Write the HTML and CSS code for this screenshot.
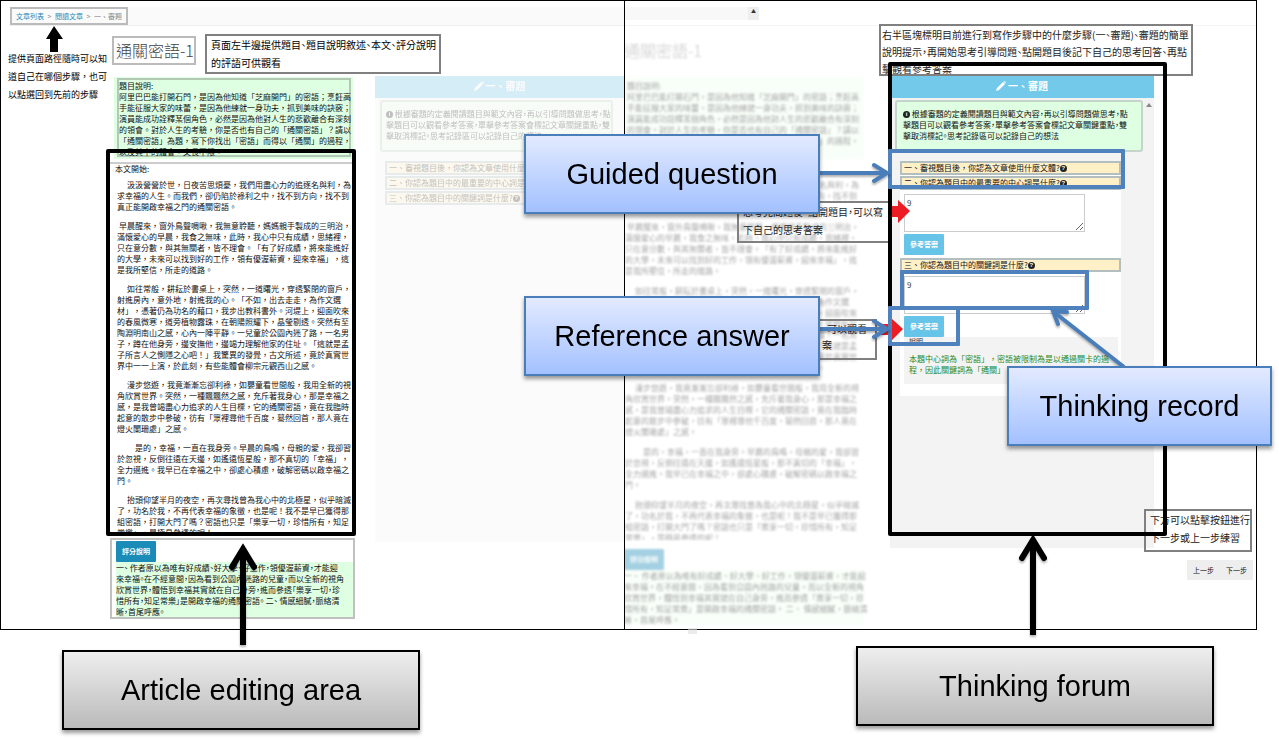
FILE: index.html
```html
<!DOCTYPE html>
<html lang="zh-Hant">
<head>
<meta charset="utf-8">
<title>通關密語-1</title>
<link rel="stylesheet" href="styles.css">
</head>
<body>
<main class="figure">
  <div class="screens">
    <section class="screen screen-left">
      <header class="topbar">
        <nav class="crumbs"><a href="#list">文章列表</a><span>&gt;</span><a href="#read">閱讀文章</a><span>&gt;</span><span>一、審題</span></nav>
      </header>
      <div class="columns">
        <article class="article">
          <h1 class="title">通關密語-1</h1>
          <div class="topic"><p class="topic-text">題目說明:<br>阿里巴巴能打開石門,是因為他知道「芝麻開門」的密語;烹飪高<br>手能征服大家的味蕾,是因為他練就一身功夫,抓到美味的訣竅;<br>演員能成功詮釋某個角色,必然是因為他對人生的悲歡離合有深刻<br>的領會。對於人生的考驗,你是否也有自己的「通關密語」?請以<br>「通關密語」為題,寫下你找出「密語」而得以「通關」的過程,<br>以及其中的體會。文長不限。</p></div>
          <div class="story">
            <h2 class="story-start">本文開始:</h2>
            <p class="in2">汲汲營營於世,日夜苦思煩憂,我們用盡心力的追逐名與利,為<br>求幸福的人生。而我們,卻仍陷於祿利之中,找不到方向,找不到<br>真正能開啟幸福之門的通關密語。</p>
            <p class="in1">早晨醒來,窗外鳥聲啁啾,我無意聆聽,媽媽親手製成的三明治,<br>滿懷愛心的早晨,我食之無味,此時,我心中只有成績,思緒裡,<br>只在意分數,與其無關者,皆不理會。「有了好成績,將來能進好<br>的大學,未來可以找到好的工作,領有優渥薪資,迎來幸福」,這<br>是我所堅信,所走的道路。</p>
            <p class="in2">如往常般,耕耘於書桌上,突然,一道曙光,穿透緊閉的窗戶,<br>射進房內,意外地,射進我的心。「不如,出去走走,為作文選<br>材」,憑著仍為功名的藉口,我步出教科書外。河堤上,迎面吹來<br>的春風微寒,道旁植物露珠,在朝陽照耀下,晶瑩剔透。突然有至<br>陶淵明南山之感,心內一陣平靜。一兒童於公園內迷了路,一名男<br>子,蹲在他身旁,邊安撫他,邊竭力理解他家的住址。「這就是孟<br>子所言人之惻隱之心吧!」我驚異的發覺,古文所述,竟於真實世<br>界中一一上演,於此刻,有些能體會柳宗元觀西山之感。</p>
            <p class="in2">漫步悠遊,我竟漸漸忘卻利祿,如嬰童看世間般,我用全新的視<br>角欣賞世界。突然,一種飄飄然之感,充斥著我身心,那是幸福之<br>感,是我曾竭盡心力追求的人生目標,它的通關密語,竟在我臨時<br>起意的散步中參破,彷有「眾裡尋他千百度,驀然回首,那人竟在<br>燈火闌珊處」之感。</p>
            <p class="in3">是的,幸福,一直在我身旁。早晨的鳥鳴,母親的愛,我卻習<br>於忽視,反倒往遠在天邊,如遙遠恆星般,那不真切的「幸福」,<br>全力邁進。我早已在幸福之中,卻處心積慮,破解密碼以啟幸福之<br>門。</p>
            <p class="in2">抬頭仰望半月的夜空,再次尋找曾為我心中的北極星,似乎暗滅<br>了,功名於我,不再代表幸福的象徵,也是呢!我不是早已獲得那<br>組密語,打開大門了嗎?密語也只是「樂享一切,珍惜所有,知足<br>常樂」,是極易參透的呢!</p>
          </div>
          <div class="review">
            <button class="btn btn-dark" type="button">評分說明</button>
            <p class="review-text">一、 作者原以為唯有好成績、好大學、好工作,領優渥薪資,才能迎<br>來幸福。在不經意間,因為看到公園內迷路的兒童,而以全新的視角<br>欣賞世界,體悟到幸福其實就在自己身旁,進而參透「樂享一切,珍<br>惜所有,知足常樂」是開啟幸福的通關密語。 二、 情感細膩,脈絡清<br>晰,首尾呼應。</p>
          </div>
        </article>
        <section class="panel">
          <h2 class="panel-head"><svg class="pencil" viewBox="0 0 10 10"><path d="M0 10 1 7 7 1 9 3 3 9Z M7.500 .500 8.500 0 10 1.500 9.500 2.500Z"/></svg>一、審題</h2>
          <p class="hint"><i class="dot">i</i> 根據審題的定義閱讀題目與範文內容,再以引導問題做思考,點<br>擊題目可以觀看參考答案,單擊參考答案會標記文章關鍵重點,雙<br>擊取消標記。思考記錄區可以記錄自己的想法</p>
          <div class="questions">
            <button class="question" type="button">一、審視題目後,你認為文章使用什麼文體?<i class="dot">?</i></button>
            <button class="question" type="button">二、你認為題目中的最重要的中心詞是什麼?<i class="dot">?</i></button>
            <button class="question" type="button">三、你認為題目中的關鍵詞是什麼?<i class="dot">?</i></button>
          </div>
        </section>
      </div>
    </section>

    <section class="screen screen-right">
      <header class="topbar"><span class="scroll-up">▲</span></header>
      <div class="columns">
        <section class="panel">
          <h2 class="panel-head"><svg class="pencil" viewBox="0 0 10 10"><path d="M0 10 1 7 7 1 9 3 3 9Z M7.500 .500 8.500 0 10 1.500 9.500 2.500Z"/></svg>一、審題</h2>
          <p class="hint"><i class="dot">i</i> 根據審題的定義閱讀題目與範文內容,再以引導問題做思考,點<br>擊題目可以觀看參考答案,單擊參考答案會標記文章關鍵重點,雙<br>擊取消標記。思考記錄區可以記錄自己的想法</p>
          <div class="questions">
            <button class="question" type="button">一、審視題目後,你認為文章使用什麼文體?<i class="dot">?</i></button>
            <button class="question" type="button">二、你認為題目中的最重要的中心詞是什麼?<i class="dot">?</i></button>
            <div class="reply">
              <textarea class="record" aria-label="思考記錄二">9</textarea>
              <button class="btn btn-light" type="button">參考答案</button>
            </div>
            <button class="question" type="button">三、你認為題目中的關鍵詞是什麼?<i class="dot">?</i></button>
            <div class="reply">
              <textarea class="record" aria-label="思考記錄三">9</textarea>
              <button class="btn btn-light" type="button">參考答案</button>
              <div class="answer">
                <h3>說明</h3>
                <p>本題中心詞為「密語」,密語被限制為是以通過關卡的過<br>程,因此關鍵詞為「通關」。</p>
              </div>
            </div>
          </div>
        </section>
        <div class="steps"><button type="button">上一步</button><button type="button">下一步</button></div>
      </div>
    </section>
  </div>

  <p class="note note-path">提供頁面路徑隨時可以知<br>道自己在哪個步驟,也可<br>以點選回到先前的步驟</p>
  <p class="note boxed note-left">頁面左半邊提供題目、題目說明敘述、本文、評分說明<br>的評語可供觀看</p>
  <p class="note boxed soft note-right">右半區塊標明目前進行到寫作步驟中的什麼步驟(一、審題)、審題的簡單<br>說明提示,再開始思考引導問題、點開題目後記下自己的思考回答、再點<br>擊觀看參考答案</p>
  <p class="note boxed soft note-think">思考完問題後,點開題目,可以寫<br>下自己的思考答案</p>
  <p class="note boxed soft note-answer">,可以觀看<br>案</p>
  <p class="note boxed soft note-steps">下方可以點擊按鈕進行<br>下一步或上一步練習</p>
  <span class="scroll-nub"></span>

  <svg class="marks" width="1279" height="740" viewBox="0 0 1279 740">
    <path d="M54 26 63 39H58V52H50V39H46Z"/>
    <g fill="#ed1c24"><path d="M889 206H898V200L910 211 898 223V217H889Z"/><path d="M880 324H891V318L903 329 891 341V335H880Z"/></g>
    <path fill="#888" d="M1149 103 1152 107H1146Z"/>
  </svg>
  <div class="frame frame-black frame-article"></div>
  <div class="frame frame-black frame-forum"></div>
  <div class="frame frame-blue frame-guided"></div>
  <div class="frame frame-blue frame-record"></div>
  <div class="frame frame-blue frame-answer"></div>
  <svg class="marks shadow" width="1279" height="740" viewBox="0 0 1279 740" fill="none">
    <g stroke="#000" stroke-width="6"><path d="M243 645V550M1033 635V542"/><path stroke-linecap="round" d="M232 567 243 549 254 567M1022 558 1033 540 1044 558"/></g>
    <g stroke="#4a7ebb" stroke-width="4"><path d="M819 173H886M819 329H885M1124 367 1054 312"/><path stroke-linecap="round" d="M874 165 887 173 874 181M874 321 887 329 874 337M1067 312 1053 311 1058 324"/></g>
  </svg>
  <div class="label label-blue label-guided">Guided question</div>
  <div class="label label-blue label-reference">Reference answer</div>
  <div class="label label-blue label-thinking">Thinking record</div>
  <div class="label label-gray label-article">Article editing area</div>
  <div class="label label-gray label-forum">Thinking forum</div>
</main>
<script src="page.js"></script>
</body>
</html>
```

FILE: page.js
```js
// Set Chinese running text with full-width punctuation.
const wide = { ",": "\uFF0C", ";": "\uFF1B", "!": "\uFF01", "?": "\uFF1F" };
function widen(root, pattern) {
  const walker = document.createTreeWalker(root, NodeFilter.SHOW_TEXT);
  while (walker.nextNode()) {
    walker.currentNode.data = walker.currentNode.data.replace(pattern, (c) => wide[c]);
  }
}
widen(document.querySelector(".figure"), /,/g);
widen(document.querySelector(".article"), /[;!?]/g);

// Both pages show the same article.
const copy = document.querySelector(".article").cloneNode(true);
document.querySelector(".screen-right .columns").prepend(copy);
```

FILE: styles.css
```css
* { box-sizing: border-box; }
body { margin: 0; background: #fff; color: #111; font: 8px/11px "Noto Sans CJK TC", sans-serif; }
h1, h2, h3, p { margin: 0; font-weight: normal; }
button { font: inherit; color: inherit; }
.figure { position: relative; min-height: 740px; overflow: hidden; white-space: nowrap; }

/* The two captured pages */
.screens { display: grid; grid-template-columns: 624fr 633fr; height: 630px; margin-right: 22px; }
.screen { min-width: 0; overflow: hidden; border: 1px solid #000; }
.screen-left { border-right: 0; }
.topbar { height: 19px; margin: 6px 0 10px; }
.screen-left .topbar { margin-left: 9px; background: #fafafa; border-bottom: 1px solid #eee; }
.crumbs { display: flex; justify-content: space-between; width: 118px; height: 18px; padding: 0 4px; border: 2px solid #bbb; font-size: 7px; line-height: 14px; color: #888; }
.crumbs a { color: #1e88b8; text-decoration: none; }
.columns { display: grid; align-items: start; }
.screen-left .columns { grid-template-columns: 245fr 249fr; column-gap: 20px; padding-left: 109px; }
.screen-right .columns { grid-template-columns: 241fr 264fr 78fr; column-gap: 24px; }
.article, .panel { min-width: 0; }

.title { width: 84px; height: 29px; margin: 0 0 12px 2px; padding-left: 2px; border: 2px solid #bbb; font-size: 16px; line-height: 25px; font-weight: 300; color: #444; }
.topic { margin: 0 2px 3px 4px; padding: 1px 2px 2px 3px; background: #dfffe3; }
.topic-text { height: 79px; border: 2px solid #b4c8b6; }
.story { height: 370px; padding-left: 5px; overflow: hidden; border-top: 2px solid #ccc; }
.story-start { height: 15px; font-size: 8px; line-height: 10px; }
.story p { margin: 0 0 8px 2px; }
.in1 { text-indent: 2px; }
.in2 { text-indent: 10px; }
.in3 { text-indent: 18px; }
.review { margin-top: 6px; padding: 1px 0 0 4px; border: 2px solid #c0c0c0; }
.review-text { background: #dfffe3; }
.btn { display: block; height: 21px; padding: 0 6px; border: 0; border-radius: 1px; color: #fff; font-size: 7px; font-weight: bold; line-height: 21px; }
.btn-dark { background: #1b8bb8; }
.btn-light { background: #66c4e8; }

.panel { margin-top: 40px; min-height: 466px; background: #f3f3f3; }
.panel-head { height: 22px; font-size: 10px; line-height: 20px; font-weight: bold; text-align: center; color: #fff; background: #73c9ea; }
.pencil { width: 10px; height: 10px; margin-right: 2px; vertical-align: -1px; fill: #fff; }
.hint { height: 52px; margin: 2px 11px 0 5px; padding: 6px; overflow: hidden; border: 2px solid #c4d4c8; border-radius: 3px; background: #dfffe3; }
.dot { display: inline-block; width: 7px; height: 7px; border-radius: 50%; background: #222; color: #fff; font: bold 6px/7px "Liberation Sans", sans-serif; text-align: center; vertical-align: 1px; }
.questions { margin: 9px 33px 0 10px; background: #fff; }
.question { display: block; width: 100%; height: 14px; margin-bottom: 1px; padding: 0 2px; border: 2px solid #b3bfbf; background: #fff0c8; text-align: left; line-height: 10px; overflow: hidden; }
.reply { padding: 3px 3px 3px 4px; }
.record { display: block; width: 181px; height: 38px; margin-bottom: 2px; padding: 2px; border: 1px solid #ccc; background: #fff; color: #444; font: inherit; }
.answer { min-height: 47px; margin-bottom: 9px; padding: 0 5px; background: #f3f3f3; color: #1d8a2a; }
.answer h3 { margin-bottom: 8px; font-size: 7px; line-height: 8px; color: #333; }

/* Running text set with proportional punctuation */
.review, .hint { font-feature-settings: "palt"; }

/* Left page: the panel is dimmed */
.screen-left .panel > * { opacity: .27; }
.screen-left .panel { background: #fbfbfb; }
.screen-left .hint { padding: 6px 4px; background: #effff0; }
.screen-left .questions { margin-right: 0; background: none; }

/* Right page: the article is dimmed and out of focus */
.screen-right .article { margin-left: -7px; opacity: .4; filter: blur(1px); }
.screen-right .title { color: #777; }
.screen-right .title, .screen-right .review, .screen-right .story { border-color: transparent; }
.screen-right .topic-text { border-color: transparent; }
.screen-right .topic, .screen-right .review-text { background: #f0fff0; }
.screen-right .story { height: 378px; }
.screen-right .story p { margin-bottom: 9px; }
.screen-right .review { font-feature-settings: normal; }
.screen-right .panel { min-height: 472px; }
.screen-right .topbar { display: flex; border-bottom: 1px solid #f4f4f4; }
.scroll-up { width: 134px; height: 13px; background: linear-gradient(90deg, #f8f8f8 123px, #eee 123px); color: #333; font-size: 5px; line-height: 8px; text-align: right; padding-right: 3px; }
.steps { display: flex; justify-content: flex-end; margin: 524px 3px 0 0; }
.steps button { width: 33px; height: 20px; padding: 0; border: 0; background: #eee; font-size: 7px; }

/* Remarks placed on the pages */
.note, .frame, .label, .marks, .scroll-nub { position: absolute; }
.note { font-size: 10px; line-height: 18px; color: #000; font-feature-settings: "palt"; }
.note.boxed { border: 2px solid #808080; padding-left: 4px; }
.note.soft { color: #222; }
.note-path { left: 8px; top: 50px; font-size: 9px; font-feature-settings: normal; }
.note-left { left: 205px; top: 34px; width: 236px; height: 40px; }
.note-right { left: 879px; top: 24px; width: 314px; height: 52px; line-height: 17px; }
.note.note-right { padding-left: 1px; }
.note-think { left: 737px; top: 201px; width: 155px; height: 42px; overflow: hidden; }
.note-answer { left: 780px; top: 319px; width: 97px; height: 41px; line-height: 16px; }
.note.note-answer { padding-left: 40px; }
.note-steps { left: 1144px; top: 509px; width: 108px; height: 43px; }
.scroll-nub { left: 688px; top: 628px; width: 9px; height: 6px; background: #ddd; opacity: .6; }
.marks { left: 0; top: 0; }
.shadow { filter: drop-shadow(0 2px 1px rgba(0, 0, 0, .3)); }
.frame-black { border: 4px solid #000; border-radius: 2px; }
.frame-blue { border: 4px solid #4f81bd; border-radius: 1px; }
.frame-article { left: 106px; top: 149px; width: 250px; height: 387px; }
.frame-forum { left: 888px; top: 62px; width: 279px; height: 474px; }
.frame-guided { left: 888px; top: 149px; width: 237px; height: 40px; }
.frame-record { left: 900px; top: 270px; width: 189px; height: 40px; }
.frame-answer { left: 888px; top: 306px; width: 72px; height: 40px; }

.label { display: flex; align-items: center; justify-content: center; width: 296px; height: 80px; border: 2px solid #4a7ebb; box-shadow: 0 3px 4px rgba(0, 0, 0, .4); color: #000; font: 29px/34px "Liberation Sans", Arial, sans-serif; }
.label-blue { background: linear-gradient(#e2eaff, #a3c1ff); }
.label-gray { width: 358px; border-color: #000; background: linear-gradient(#eee, #bababa); }
.label-guided { left: 524px; top: 134px; }
.label-reference { left: 524px; top: 296px; }
.label-thinking { left: 1007px; top: 366px; width: 265px; }
.label-article { left: 62px; top: 650px; }
.label-forum { left: 856px; top: 646px; }
```
